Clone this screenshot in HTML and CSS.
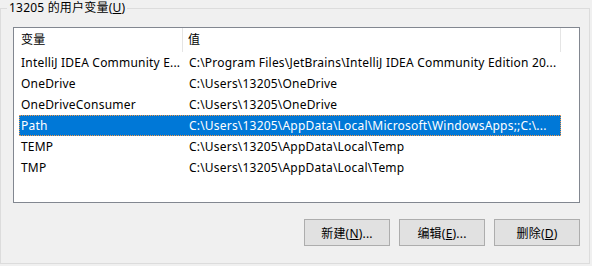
FILE: index.html
```html
<!DOCTYPE html>
<html lang="zh-CN">
<head>
<meta charset="utf-8">
<title>用户变量</title>
<link rel="stylesheet" href="styles.css">
</head>
<body>
<div class="group">
  <div class="legend">13205 的用户变量(<u>U</u>)</div>
  <div class="list">
    <div class="header">
      <div class="hcol h1">变量</div>
      <div class="hcol h2">值</div>
    </div>
    <div class="row"><div class="c1">IntelliJ IDEA Community E...</div><div class="c2">C:\Program Files\JetBrains\IntelliJ IDEA Community Edition 20...</div></div>
    <div class="row"><div class="c1">OneDrive</div><div class="c2">C:\Users\13205\OneDrive</div></div>
    <div class="row"><div class="c1">OneDriveConsumer</div><div class="c2">C:\Users\13205\OneDrive</div></div>
    <div class="row selected"><div class="c1">Path</div><div class="c2">C:\Users\13205\AppData\Local\Microsoft\WindowsApps;;C:\...</div></div>
    <div class="row"><div class="c1">TEMP</div><div class="c2">C:\Users\13205\AppData\Local\Temp</div></div>
    <div class="row"><div class="c1">TMP</div><div class="c2">C:\Users\13205\AppData\Local\Temp</div></div>
  </div>
  <div class="buttons">
    <button class="btn">新建(<u>N</u>)...</button>
    <button class="btn">编辑(<u>E</u>)...</button>
    <button class="btn">删除(<u>D</u>)</button>
  </div>
</div>
</body>
</html>
```
FILE: styles.css
```css
* { box-sizing: border-box; }
html, body {
  margin: 0;
  padding: 0;
  background: #f0f0f0;
  width: 592px;
  height: 266px;
  overflow: hidden;
}
body {
  font-family: "Noto Sans", "Noto Sans CJK SC", sans-serif;
  font-size: 12px;
  letter-spacing: 0.2px;
  color: #000;
  padding-top: 8px;
}
.group {
  position: relative;
  width: 590px;
  height: 256px;
  border: 1px solid #dcdcdc;
  padding: 18px 0 0 12px;
}
.legend {
  position: absolute;
  left: 6px;
  top: -10px;
  padding: 0 2px 0 2px;
  background: #f0f0f0;
  line-height: 18px;
  height: 18px;
}
.list {
  width: 567px;
  height: 176px;
  border: 1px solid #828790;
  background: #fff;
}
.header {
  display: flex;
  height: 24px;
}
.hcol {
  height: 24px;
  line-height: 23px;
  border-right: 1px solid #e5e5e5;
  white-space: nowrap;
}
.h1 { width: 169px; padding-left: 7px; }
.h2 { width: 378px; padding-left: 5px; }
.row {
  display: flex;
  margin-left: 5px;
  width: 542px;
  height: 21px;
  line-height: 21px;
  white-space: nowrap;
}
.row .c1 { width: 163px; padding-left: 2px; overflow: hidden; }
.row .c2 { flex: 1; padding-left: 7px; overflow: hidden; }
.row.selected {
  background: #0078d7;
  color: #fff;
  outline: 1px dotted #f39a4a;
  outline-offset: -1px;
}
.buttons {
  display: flex;
  justify-content: flex-end;
  gap: 9px;
  width: 567px;
  margin-top: 16px;
}
.btn {
  width: 86px;
  height: 27px;
  background: #e1e1e1;
  border: 1px solid #adadad;
  font-family: inherit;
  font-size: 12px;
  letter-spacing: 0.2px;
  color: #000;
  padding: 0;
}
```
